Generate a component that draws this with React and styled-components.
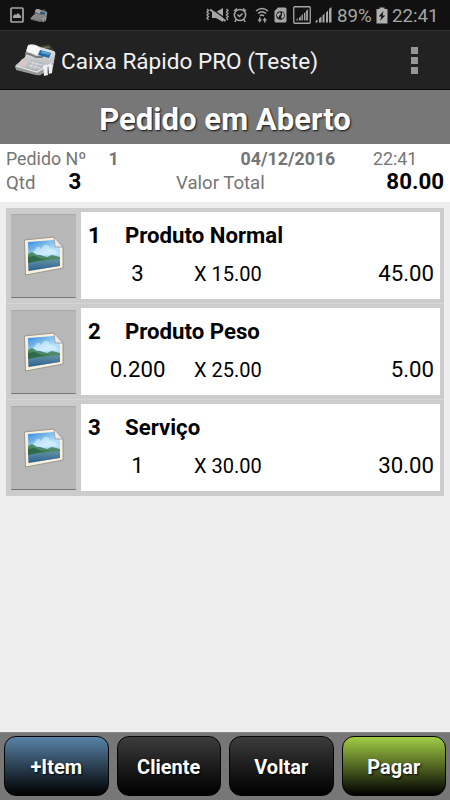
import React from 'react';
import styled, { createGlobalStyle } from 'styled-components';

const GlobalStyle = createGlobalStyle`
    * {
        box-sizing: border-box;
    }

    body {
        margin: 0;
        background: #eee;
        font-family: Roboto, 'Liberation Sans', sans-serif;
    }
`;

const Screen = styled.div`
    display: flex;
    flex-direction: column;
    width: 450px;
    height: 800px;
    overflow: hidden;
    background: #eee;
`;

const StatusBar = styled.div`
    display: flex;
    align-items: center;
    height: 30px;
    padding: 0 12px 0 10px;
    background: #111;
    color: #a6a6a6;
    font-size: 18.7px;
    line-height: 30px;

    svg {
        flex: none;
    }
`;

const Notifications = styled.div`
    display: flex;
    align-items: center;
    gap: 6px;
    flex: 1;
`;

const Indicators = styled.div`
    display: flex;
    align-items: center;
`;

const Spacer = styled.span`
    width: ${props => props.$width}px;
`;

const Percent = styled.span`
    width: 35px;
    margin: 1px 4px 0 4px;
`;

const Clock = styled.span`
    width: 46px;
    margin: 1px 0 0 4px;
`;

const ActionBar = styled.div`
    display: flex;
    align-items: center;
    height: 60px;
    padding: 0 32px 0 14px;
    border-top: 1px solid #303030;
    border-bottom: 1px solid #0c0c0c;
    background: #222;
`;

const AppName = styled.div`
    flex: 1;
    margin: 3px 0 0 4px;
    color: #f2f2f2;
    font-size: 22.55px;
    line-height: 60px;
    white-space: nowrap;
`;

const Overflow = styled.div`
    display: flex;
    flex-direction: column;
    gap: 3px;

    i {
        width: 7px;
        height: 7px;
        background: #969696;
    }
`;

const Title = styled.h1`
    height: 54px;
    margin: 0;
    background: #777;
    color: #fff;
    font-size: 31.1px;
    font-weight: 700;
    line-height: 59px;
    text-align: center;
    text-shadow: 1px 1px 2px #111;
`;

const Summary = styled.div`
    height: 58px;
    padding: 3px 6px 0;
    background: #fff;
    color: #757575;
`;

const SummaryLine = styled.div`
    display: flex;
    align-items: baseline;
    height: ${props => props.$height}px;
    font-size: ${props => props.$size}px;
    line-height: ${props => props.$height}px;
    white-space: nowrap;
`;

const Cell = styled.span`
    width: ${props => props.$width}px;
    flex: ${props => (props.$width ? 'none' : 1)};
    color: ${props => (props.$strong ? '#000' : 'inherit')};
    font-size: ${props => (props.$strong ? '22.3px' : 'inherit')};
    font-weight: ${props => (props.$bold || props.$strong ? 700 : 400)};
    text-align: ${props => props.$align || 'left'};
`;

const List = styled.div`
    flex: 1;
    padding: 6px 6px 0;
`;

const Item = styled.div`
    display: flex;
    height: 96px;
    padding: 4px 4px 4px 5px;
    border-bottom: ${props => (props.$last ? 'none' : '1px solid #d6d6d6')};
    background: #ccc;
`;

const Thumb = styled.div`
    display: flex;
    align-items: center;
    justify-content: center;
    width: 65px;
    height: 84px;
    margin: 2px 5px 0 0;
    border-top: 1px solid #aaa;
    border-bottom: 1px solid #777;
    border-radius: 1px;
    background: #b7b7b7;
`;

const Details = styled.div`
    flex: 1;
    height: 87px;
    padding: 5px 6px 0 7px;
    background: #fff;
    color: #000;
    font-size: 22.2px;
`;

const NameLine = styled.div`
    display: flex;
    height: 38px;
    font-weight: 700;
    line-height: 37px;

    span {
        width: 37px;
    }
`;

const PriceLine = styled.div`
    display: flex;
    align-items: baseline;
    height: 37px;
    line-height: 37px;
`;

const Quantity = styled.span`
    width: 70px;
    margin-left: 14.5px;
    text-align: center;
`;

const UnitPrice = styled.span`
    flex: 1;
    margin-left: 21.5px;
    font-size: 20px;
`;

const Footer = styled.div`
    display: grid;
    grid-template-columns: repeat(4, 1fr);
    gap: 8px;
    height: 68px;
    padding: 3px 4px 4px;
    border-top: 1px solid #8a8a8a;
    background: #777;
`;

const Button = styled.button`
    height: 60px;
    padding: 1px 0 0;
    border: 1px solid #050505;
    border-radius: 12px;
    background: linear-gradient(${props => props.$colors || '#3c3c3c, #1c1c1c 50%, #000'});
    color: #fff;
    font-family: inherit;
    font-size: 20px;
    font-weight: 700;
    text-shadow: 1px 1px 2px #000;
`;

const Register = ({ width, height, dim }) => (
    <svg width={width} height={height} viewBox="0 0 43 36" opacity={dim ? 0.65 : 1}>
        <defs>
            <linearGradient id="body" x1="0" y1="0" x2="0" y2="1">
                <stop offset="0" stopColor="#e8eaea" />
                <stop offset="1" stopColor="#a4a9ac" />
            </linearGradient>
        </defs>
        <path d="M25 4 36 2 39 7 37 11 24 7Z" fill="#343832" />
        <path d="M28 5 35 4 36 6 29 7Z" fill="#64704a" />
        <path d="M14 3 Q20 1 26 5 L40 9 Q42 10 41 14 L39 25 26 33 Q22 34 19 31 L2 27 Q0 24 3 22 L11 15Z" fill="url(#body)" />
        <path d="M2 24 24 29 39 19 39 25 26 33 22 33 2 28Z" fill="#999" />
        <path d="M2 24 23 30 39 20" stroke="#ececec" strokeWidth="1.2" fill="none" />
        <path d="M14 4 Q22 3 27 7 L23 13 12 9Z" fill="#f6f6f6" />
        <path d="M11 11 Q17 12 22 15 L29 15" stroke="#777c7f" strokeWidth="2" fill="none" />
        <path d="M26 8 37 11 35 16 24 13Z" fill="#226ba5" />
        <path d="M28 9 36 11 35 13 27 11Z" fill="#54a8dc" />
        <path d="M8 17 15 19 11 25 4 23Z" fill="#d9c9c6" />
        <path d="M17 18 30 21 25 28 13 25Z" fill="#b4bac3" />
        <path d="M16 20 28 23M14 23 26 26M20 19 16 26M24 20 20 27" stroke="#e2e2e2" strokeWidth="0.8" />
        <path d="M29 24 Q32 21 34 24 L34 33 30 34ZM34 23 Q37 21 39 23 L38 31 35 32Z" fill="#eceeef" />
        <path d="M34 25 V32" stroke="#6e7478" />
    </svg>
);

const Picture = () => (
    <svg width="42" height="41" viewBox="0 0 42 41">
        <defs>
            <linearGradient id="sky" x1="0" y1="0" x2="0.5" y2="1">
                <stop offset="0" stopColor="#3187dc" />
                <stop offset="0.55" stopColor="#b1e1fa" />
            </linearGradient>
            <linearGradient id="sea" x1="0" y1="0" x2="0" y2="1">
                <stop offset="0" stopColor="#729caa" />
                <stop offset="1" stopColor="#285f8c" />
            </linearGradient>
        </defs>
        <path d="M1.5 4 31 1 40 11 40 32 2.5 39Z" fill="#faf0dc" stroke="#8b8883" strokeWidth="0.8" />
        <path d="M5 6 31 4 37 12 37 30 5.5 35Z" fill="url(#sky)" />
        <path d="M12 14 Q15 8 18 13 Q23 5 27 12 L32 14 35 18 18 19 9 17Z" fill="#e2f5fc" opacity="0.6" />
        <path d="M5 24 37 21 37 30 5.5 35Z" fill="url(#sea)" />
        <path d="M5 18 9 16 14 19 17 19 24 21 29 19 37 21 37 23 21 25 5 27Z" fill="#4d8a68" />
        <path d="M5 21 12 20 18 23 28 22 5 27Z" fill="#2d6a4a" />
        <path d="M31 1 40 11 32 11Z" fill="#e8eaec" stroke="#a0a1a2" strokeWidth="1" />
    </svg>
);

const ImageIcon = () => (
    <svg width="14" height="16" viewBox="0 0 14 16">
        <rect x="1" y="1" width="12" height="14" rx="1" fill="none" stroke="#a6a6a6" strokeWidth="1.7" />
        <path d="M3 11 V9 L5 7 6 8 8 6 11 9 V11Z" fill="#a6a6a6" />
    </svg>
);

const MuteIcon = () => (
    <svg width="24" height="16" viewBox="0 0 24 16" fill="none" stroke="#a6a6a6">
        <path d="M1 2 2.5 3.5 1 5 2.5 6.5 1 8 2.5 9.5 1 11 2.5 13M20.5 2 22 3.5 20.5 5 22 6.5 20.5 8 22 9.5 20.5 11 22 13" strokeWidth="1.4" />
        <path d="M6 5 H10 L17 1 V15 L10 11 H6Z" fill="#a6a6a6" stroke="none" />
        <path d="M6 2 20 12" stroke="#111" strokeWidth="1.2" />
        <path d="M4 2.5 19.5 14" strokeWidth="2" />
    </svg>
);

const AlarmIcon = () => (
    <svg width="14" height="16" viewBox="0 0 14 16" fill="none" stroke="#a6a6a6" strokeWidth="1.5">
        <circle cx="7" cy="8" r="5.6" />
        <path d="M1 4 4 1.5M10 1.5 13 4M3 12.5 2 15M11 12.5 12 15M4.5 7.5 6.5 9.5 9.5 6.5" />
    </svg>
);

const WifiIcon = () => (
    <svg width="14" height="16" viewBox="0 0 14 16" fill="none" stroke="#a6a6a6" strokeWidth="1.6">
        <path d="M1 4 Q7 -1 13 4M3 6.5 Q7 3 11 6.5M5 8.8 Q7 7.2 9 8.8" />
        <path d="M4 10.5 H5.5 V12.5 H7 L4.7 15.5 2.5 12.5 H4Z" fill="#a6a6a6" stroke="none" />
        <path d="M9 15.5 H10.5 V13.5 H12 L9.7 10.5 7.5 13.5 H9Z" fill="#a6a6a6" stroke="none" />
    </svg>
);

const SimIcon = () => (
    <svg width="13" height="16" viewBox="0 0 13 16">
        <path d="M4 0.5 H11 Q12.5 0.5 12.5 2 V14 Q12.5 15.5 11 15.5 H2 Q0.5 15.5 0.5 14 V4Z" fill="#a6a6a6" />
        <circle cx="6.5" cy="8.5" r="4.3" fill="#151515" />
        <path d="M3 7 6 5 7 7 5 9 5 11 3 9ZM8 5 10 7 10 10 8 12 7 10 8 8Z" fill="#a6a6a6" />
    </svg>
);

const SignalIcon = ({ boxed }) => (
    <svg width="18" height="18" viewBox="0 0 18 18">
        {boxed && <rect x="0.75" y="0.75" width="16.5" height="16.5" rx="1" fill="none" stroke="#a6a6a6" strokeWidth="1.3" />}
        <g fill="#a6a6a6" transform={boxed ? 'translate(2.7 3) scale(0.72)' : 'translate(-0.5 0.5)'}>
            <path d="M1 16 V14.5 L3 13 V16ZM4.5 16 V12 L7 10 V16ZM8 16 V9 L10 7 V16ZM11.5 16 V6 L13.5 4 V16ZM14.5 16 V2.5 L17 0.5 V16Z" />
        </g>
    </svg>
);

const BatteryIcon = () => (
    <svg width="12" height="17" viewBox="0 0 12 17">
        <path d="M3.5 0.5 H8.5 V2 H11.5 V16.5 H0.5 V2 H3.5Z" fill="#b0b0b0" />
        <path d="M7.5 4 2.8 9.5 H5.5 L4 14 9.2 8.5 H6.5Z" fill="#111" />
    </svg>
);

const items = [
    { name: 'Produto Normal', qty: '3', price: '15.00', total: '45.00' },
    { name: 'Produto Peso', qty: '0.200', price: '25.00', total: '5.00' },
    { name: 'Serviço', qty: '1', price: '30.00', total: '30.00' },
];

const App = () => (
    <>
        <GlobalStyle />
        <Screen>
            <StatusBar>
                <Notifications>
                    <ImageIcon />
                    <Register width={18} height={15} dim />
                </Notifications>
                <Indicators>
                    <MuteIcon />
                    <Spacer $width={3} />
                    <AlarmIcon />
                    <Spacer $width={8} />
                    <WifiIcon />
                    <Spacer $width={5} />
                    <SimIcon />
                    <Spacer $width={6} />
                    <SignalIcon boxed />
                    <Spacer $width={4} />
                    <SignalIcon />
                    <Percent>89%</Percent>
                    <BatteryIcon />
                    <Clock>22:41</Clock>
                </Indicators>
            </StatusBar>
            <ActionBar>
                <Register width={43} height={36} />
                <AppName>Caixa Rápido PRO (Teste)</AppName>
                <Overflow><i /><i /><i /></Overflow>
            </ActionBar>
            <Title>Pedido em Aberto</Title>
            <Summary>
                <SummaryLine $height={24} $size={17.8}>
                    <Cell $width={102.5}>Pedido Nº</Cell>
                    <Cell $width={132} $bold>1</Cell>
                    <Cell $width={132.5} $bold>04/12/2016</Cell>
                    <Cell>22:41</Cell>
                </SummaryLine>
                <SummaryLine $height={21} $size={18.6}>
                    <Cell $width={62.5}>Qtd</Cell>
                    <Cell $width={107.5} $strong>3</Cell>
                    <Cell $width={120}>Valor Total</Cell>
                    <Cell $strong $align="right">80.00</Cell>
                </SummaryLine>
            </Summary>
            <List>
                {items.map((item, i) => (
                    <Item key={item.name} $last={i === items.length - 1}>
                        <Thumb><Picture /></Thumb>
                        <Details>
                            <NameLine><span>{i + 1}</span>{item.name}</NameLine>
                            <PriceLine>
                                <Quantity>{item.qty}</Quantity>
                                <UnitPrice>X {item.price}</UnitPrice>
                                {item.total}
                            </PriceLine>
                        </Details>
                    </Item>
                ))}
            </List>
            <Footer>
                <Button $colors="#5983a9, #2b4153 50%, #000">+Item</Button>
                <Button>Cliente</Button>
                <Button>Voltar</Button>
                <Button $colors="#a2cc45, #526722 50%, #000">Pagar</Button>
            </Footer>
        </Screen>
    </>
);

export default App;
